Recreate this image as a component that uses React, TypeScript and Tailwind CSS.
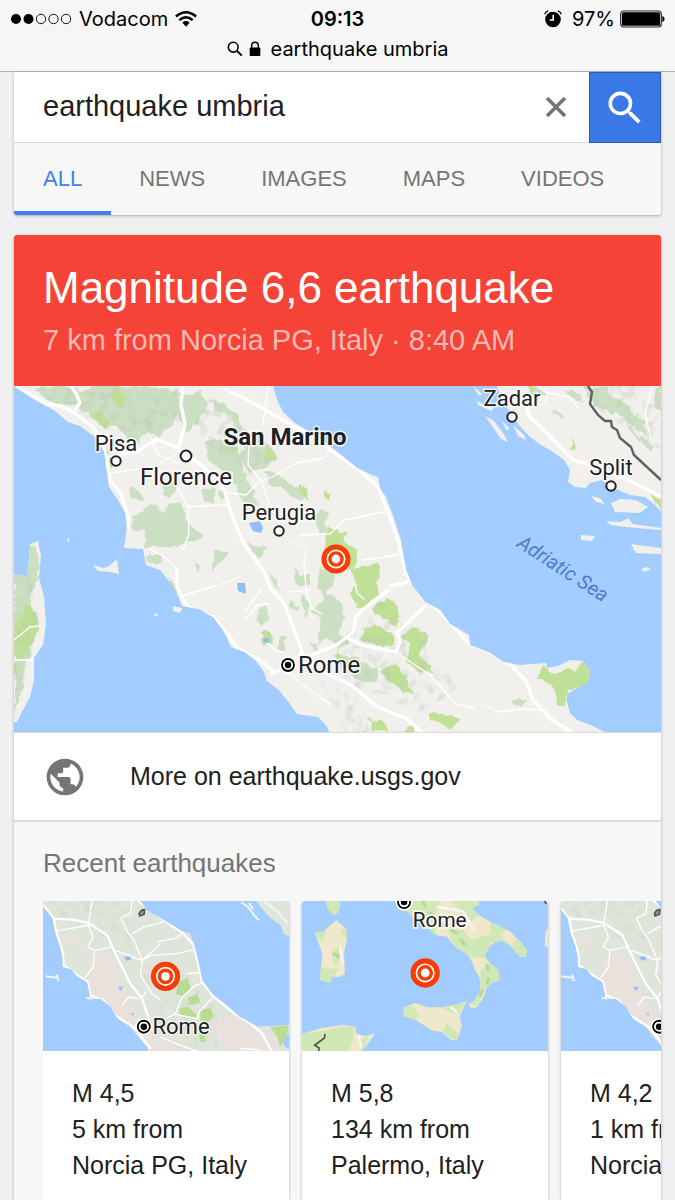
import { useState } from 'react';
import { MdPublic, MdSearch } from 'react-icons/md';

const SANS = "font-['Liberation_Sans',Arial,sans-serif]";

function SignalIcon() {
  return (
    <svg className="h-3 w-[62px]" viewBox="0 0 62 12" aria-hidden="true">
      <circle cx="6" cy="6" r="5" />
      <circle cx="18.500" cy="6" r="5" />
      <g fill="none" stroke="#111" strokeWidth="1">
        <circle cx="31" cy="6" r="4.700" />
        <circle cx="43.500" cy="6" r="4.700" />
        <circle cx="56" cy="6" r="4.700" />
      </g>
    </svg>
  );
}

function WifiIcon() {
  return (
    <svg className="h-4 w-[22px]" viewBox="0 0 22 16" aria-hidden="true" fill="none" stroke="#000" strokeWidth="2.400">
      <path d="M0.900 5.500 Q11 -3 21.100 5.500" />
      <path d="M4.300 9.200 Q11 3.400 17.700 9.200" />
      <path d="M7.300 11.500 Q11 8.600 14.700 11.500 L11 15.800 Z" fill="#000" stroke="none" />
    </svg>
  );
}

function AlarmIcon() {
  return (
    <svg className="h-[18px] w-[18px]" viewBox="0 0 18 18" aria-hidden="true">
      <circle cx="9" cy="9.500" r="7.800" />
      <path d="M0.700 4.200 Q1.500 1.800 4.200 0.900 M17.300 4.200 Q16.500 1.800 13.800 0.900" fill="none" stroke="#000" strokeWidth="1.300" />
      <path d="M9.200 4.800 V10 H5.600" fill="none" stroke="#fff" strokeWidth="1.600" />
    </svg>
  );
}

function BatteryIcon() {
  return (
    <svg className="h-[18px] w-[45px]" viewBox="0 0 45 18" aria-hidden="true">
      <rect x="0.700" y="1" width="40.600" height="16" rx="3" fill="none" stroke="#222" strokeWidth="1.200" />
      <rect x="2" y="2.300" width="38" height="13.400" rx="1.500" />
      <path d="M42.300 6 Q44.600 6.500 44.600 9 Q44.600 11.500 42.300 12 Z" />
    </svg>
  );
}

function SmallSearchIcon() {
  return (
    <svg className="h-4 w-4" viewBox="0 0 16 16" aria-hidden="true" fill="none" stroke="#000" strokeWidth="1.600">
      <circle cx="6.200" cy="6.200" r="4.900" />
      <path d="M9.800 9.800 L14.800 14.600" strokeWidth="2" />
    </svg>
  );
}

function LockIcon() {
  return (
    <svg className="h-4 w-3" viewBox="0 0 12 16" aria-hidden="true">
      <rect x="0.700" y="6.500" width="10.600" height="8.500" rx="0.800" />
      <path d="M2.700 7 V4.600 Q2.700 1.300 6 1.300 Q9.300 1.300 9.300 4.600 V7" fill="none" stroke="#000" strokeWidth="1.500" />
    </svg>
  );
}

function ClearIcon() {
  return (
    <svg className="h-[22px] w-[22px]" viewBox="0 0 22 22" aria-hidden="true" fill="none" stroke="#757575" strokeWidth="3.600">
      <path d="M2 2 L20 20 M20 2 L2 20" />
    </svg>
  );
}

function Epicentre({ x, y, s = 1 }: { x: number; y: number; s?: number }) {
  return (
    <g>
      <circle cx={x} cy={y} r={14.6 * s} fill="#f93c02" />
      <circle cx={x} cy={y} r={8.7 * s} fill="none" stroke="#fff" strokeWidth={1.7 * s} />
      <circle cx={x} cy={y} r={4.4 * s} fill="#fff" />
    </g>
  );
}

function Capital({ x, y, s = 1 }: { x: number; y: number; s?: number }) {
  return (
    <g>
      <circle cx={x} cy={y} r={8.6 * s} fill="#fff" />
      <circle cx={x} cy={y} r={6 * s} fill="#fff" stroke="#000" strokeWidth={1.8 * s} />
      <circle cx={x} cy={y} r={3.2 * s} fill="#000" />
    </g>
  );
}

const italy =
  'M14 386 L35 400 55 411 68 422 80 426 95 437 104 451 106 468 109 487 118 500 125 513 127 527 124 548 143 549 146 565 160 570 168 580 176 591 182 606 199 609 213 617 223 630 231 647 245 652 255 660 264 672 267 681 279 690 290 704 297 714 318 717 325 724 330 733 L606 733 593 726 577 720 570 713 567 702 567 694 588 682 590 671 583 661 570 660 558 666 547 668 546 663 520 665 503 662 490 653 470 645 469 635 450 624 440 610 425 602 412 585 406 570 401 540 393 515 386 497 380 488 378 477 370 474 357 468 335 450 315 435 295 423 283 412 277 400 273 385 Z';
const corsica =
  'M14 574 L20 575 27 577 29 560 30 544 38 541 41 556 39 578 44 597 46 625 43 645 34 658 34 680 30 697 23 710 17 722 14 722 Z';
const croatia =
  'M497 385 L501 400 512 414 519 425 530 437 541 445 553 452 564 460 570 470 568 482 575 487 586 488 590 483 602 480 616 489 630 495 645 497 654 504 662 513 662 385 Z';
const islands = [
  'M473 386 L482 394 479 396 Z', 'M477 401 L486 406 494 408 491 411 478 405 Z', 'M485 416 L494 421 503 433 508 442 501 439 493 427 Z',
  'M513 425 L524 435 526 440 518 436 Z', 'M501 420 L509 428 507 431 Z', 'M591 496 L600 498 605 504 596 502 Z',
  'M611 503 L620 499 636 500 648 507 640 513 615 512 Z', 'M606 521 L621 522 628 518 633 524 661 528 661 530 635 528 611 525 Z',
  'M581 535 L595 536 592 541 581 540 Z', 'M631 544 L661 548 661 554 636 553 Z', 'M641 569 L646 567 651 569 645 572 Z',
  'M630 549 L662 551 659 554 642 552 Z', 'M93 565 L104 568 109 566 117 559 119 574 111 572 98 571 Z',
  'M153 615 L156 613 159 617 Z', 'M173 606 L182 608 180 613 173 611 Z', 'M67 541 L69 536 69 542 Z',
];
const paleGreens = [
  'M35 388 L68 387 82 392 96 386 150 386 178 391 181 409 171 426 158 436 146 432 137 443 126 436 116 426 98 424 88 413 70 405 50 402 Z',
  'M190 398 L213 401 216 411 228 417 238 434 247 444 239 457 247 471 264 468 275 459 274 449 260 437 242 428 236 414 225 405 Z',
  'M180 395 L202 390 208 405 199 420 188 432 180 423 Z',
  'M206 442 L222 439 238 452 246 481 256 491 247 504 237 490 233 474 216 467 207 459 Z',
  'M129 486 L142 493 146 501 131 500 Z', 'M133 516 L150 505 164 512 169 503 182 501 185 519 203 537 189 542 178 548 146 546 143 532 130 526 Z',
  'M164 484 L175 487 171 499 165 496 Z', 'M203 487 L215 491 212 505 203 499 Z', 'M219 490 L226 491 226 502 220 499 Z',
  'M247 492 L258 502 255 507 243 502 Z', 'M264 471 L280 475 290 485 300 487 309 500 300 501 288 492 270 484 Z',
  'M319 510 L326 513 328 531 320 533 315 522 Z', 'M249 542 L267 549 259 559 252 550 Z', 'M216 550 L228 552 222 562 213 570 Z',
  'M147 555 L160 554 164 562 152 565 146 562 Z', 'M195 565 L203 566 197 571 Z', 'M257 610 L267 606 269 620 262 625 256 617 Z',
  'M270 573 L279 585 281 592 272 582 Z', 'M291 600 L298 607 299 613 291 607 Z', 'M304 594 L308 605 306 618 301 605 Z',
  'M320 568 L332 571 336 580 326 591 337 600 345 617 339 631 349 641 338 650 328 638 317 643 322 622 312 609 326 602 317 585 Z',
  'M337 651 L360 659 377 670 377 682 362 683 350 672 338 664 Z', 'M294 566 L300 575 310 575 309 583 295 586 Z',
  'M279 636 L286 638 283 655 279 651 Z', 'M310 643 L318 642 316 651 Z', 'M512 702 L519 698 527 699 520 707 Z',
  'M536 387 L545 394 536 400 527 393 Z', 'M583 386 L605 387 612 397 627 402 633 414 644 421 646 438 636 428 622 417 610 411 594 407 586 393 Z',
  'M623 421 L638 436 653 445 651 452 636 437 Z', 'M565 389 L580 394 582 401 570 398 Z', 'M552 412 L563 413 563 417 553 415 Z',
  'M14 574 L27 577 29 545 38 544 39 576 32 594 25 622 31 650 25 673 18 705 14 712 Z', 'M654 387 L662 387 662 414 656 405 Z',
];
const brightGreens = [
  'M324 535 L330 524 341 533 348 530 345 542 358 549 355 566 348 570 339 556 326 550 Z', 'M351 568 L376 564 380 570 376 590 379 596 370 606 357 607 351 594 357 584 Z',
  'M372 610 L386 598 397 603 399 618 396 628 385 618 376 616 Z', 'M359 638 L373 623 386 630 392 638 393 646 370 644 Z',
  'M400 636 L413 628 425 631 427 643 418 656 428 662 432 670 419 672 407 661 410 644 Z', 'M380 672 L396 664 406 677 412 694 403 693 396 683 386 681 Z',
  'M429 713 L451 715 460 719 454 731 445 727 430 720 Z', 'M368 717 L384 722 387 731 371 730 Z', 'M405 728 L415 726 415 732 404 732 Z',
  'M536 677 L545 665 550 672 556 676 569 668 575 671 583 662 589 665 590 679 579 689 568 690 565 704 556 704 555 687 Z',
  'M260 634 L266 629 275 643 264 645 Z', 'M106 446 L111 462 110 475 106 475 Z', 'M168 577 L175 582 176 592 Z',
  'M90 415 L100 411 110 423 105 429 Z', 'M115 386 L125 400 120 407 108 396 Z', 'M229 444 L239 449 232 455 Z', 'M266 447 L273 450 274 461 265 458 Z',
  'M323 491 L332 492 329 501 Z', 'M570 451 L573 437 576 451 Z', 'M15 628 L25 605 36 612 39 629 29 650 18 660 14 680 Z', 'M527 386 L535 388 534 397 Z',
  'M651 497 L661 499 661 510 655 505 Z', 'M338 650 L345 660 337 665 333 655 Z', 'M512 443 L520 451 513 446 Z', 'M298 482 L309 493 307 501 300 495 Z',
];
const ranges =
  'M30 388 H178 L182 420 140 445 96 424 60 406 Z M185 398 H214 L240 430 275 460 245 480 206 450 Z M340 640 L380 600 430 640 440 680 420 700 360 690 335 670 Z M395 655 L440 665 460 690 420 712 390 700 Z M583 386 H661 V450 L600 412 Z M14 574 H30 L40 620 14 720 Z M320 680 L360 700 370 732 345 732 Z';
const highways = [
  'M14 387 L35 397 47 404 61 406 75 413 94 428 100 440 107 457 110 480 121 494 128 514 128 528', 'M73 413 L80 403 76 393 71 386',
  'M183 386 L181 405 185 424 178 450 M180 449 L157 439 138 451 118 455', 'M181 451 L204 467 224 489 230 510 235 523 243 542 265 573 270 588 284 603 291 622 298 640 303 655',
  'M225 389 L244 398 264 409 291 425 311 435 325 446 345 460 364 474 378 487 391 520 399 544 406 573 423 598 437 609 452 625 469 643 489 652 512 666 526 681 533 700 552 720 570 731',
  'M177 570 L177 587 187 606 213 617 228 634 237 648 260 660 275 673', 'M300 660 L330 675 351 685 376 706 407 719 421 732',
  'M312 655 L338 644 353 632 356 616 372 602 389 590 M349 639 L362 645 396 652 400 641 397 633 425 606',
  'M525 400 L529 416 552 438 573 460 600 468 626 479 646 489 660 496', 'M391 586 L407 582', 'M301 654 L285 668 271 674',
];
const lanes = [
  'M225 492 L246 495 259 482 272 477 296 463 324 458 335 440', 'M188 507 L218 505 228 505 M178 488 L188 507 189 533 183 550', 'M242 430 L249 445 248 465 262 482 270 508',
  'M290 540 L306 548 304 565 306 588 311 608 322 614', 'M261 590 L246 610 M290 592 L310 590 M269 604 L257 605 246 619', 'M300 535 L330 534 344 520 379 513 389 511',
  'M363 560 L385 557 400 554', 'M265 640 L276 651 285 652 M184 595 L216 586 239 577', 'M268 386 L263 425 M110 473 L156 466 176 454',
  'M483 705 L499 712 525 709 540 710', 'M400 655 L430 675 456 704 474 708', 'M652 387 L645 414 651 438', 'M150 436 L158 455 178 463', 'M355 584 L357 593 364 599',
  'M537 386 L548 393 545 404 522 405 M548 393 L570 397 578 408', 'M285 668 L300 683 330 704', 'M14 640 L30 627 39 626 M14 660 L34 660', 'M148 548 L165 557 176 568 177 575',
];

function MapLabel({ x, y, bold, large, children }: { x: number; y: number; bold?: boolean; large?: boolean; children: string }) {
  const face = bold
    ? "font-['Roboto',sans-serif] text-[24px] font-bold"
    : large
      ? "font-['Roboto',sans-serif] text-[24px]"
      : "font-['Roboto',sans-serif] text-[22px]";
  return (
    <text x={x} y={y} textAnchor="middle" paintOrder="stroke" stroke="#fff" strokeOpacity="0.750" strokeWidth="3" fill="#202124" className={face}>
      {children}
    </text>
  );
}

function RegionMap() {
  return (
    <svg className="block h-[346px] w-full" viewBox="14 386 647 346" preserveAspectRatio="xMidYMid slice" role="img" aria-label="Map of central Italy">
      <defs>
        <clipPath id="region-land">
          <path d={italy} /><path d={corsica} /><path d={croatia} />
        </clipPath>
        <filter id="region-rough" x="0" y="0" width="100%" height="100%">
          <feTurbulence type="fractalNoise" baseFrequency="0.100" numOctaves="2" seed="4" result="n" />
          <feDisplacementMap in="SourceGraphic" in2="n" scale="9" xChannelSelector="R" yChannelSelector="G" />
        </filter>
        <filter id="region-relief" x="0" y="0" width="100%" height="100%">
          <feTurbulence type="fractalNoise" baseFrequency="0.110" numOctaves="3" seed="9" />
          <feColorMatrix values="0 0 0 0 0.480  0 0 0 0 0.540  0 0 0 0 0.460  3 0 0 0 -1.400" />
          <feComposite in2="SourceAlpha" operator="in" />
        </filter>
      </defs>
      <rect x="14" y="386" width="647" height="346" fill="#a3ccff" />
      <g fill="#f1f0ed">
        <path d={italy} /><path d={corsica} /><path d={croatia} />
        {islands.map((d) => <path key={d} d={d} />)}
      </g>
      <g clipPath="url(#region-land)">
        <g filter="url(#region-rough)">
          <g fill="#cbdfc3">{paleGreens.map((d) => <path key={d} d={d} />)}</g>
          <g fill="#bfe096">{brightGreens.map((d) => <path key={d} d={d} />)}</g>
        </g>
        <path d={ranges} filter="url(#region-relief)" opacity="0.400" />
        <g fill="none" stroke="#fff" strokeLinejoin="round" strokeLinecap="round">
          <g strokeWidth="1.300">{lanes.map((d) => <path key={d} d={d} />)}</g>
          <g strokeWidth="3.400">{highways.map((d) => <path key={d} d={d} />)}</g>
        </g>
        <g fill="#8fbdf5">
          <path d="M249 523 L260 521 263 528 261 533 253 531 Z M237 583 L245 583 246 594 238 591 Z M263 638 L269 638 269 643 264 642 Z" />
        </g>
      </g>
      <path d="M588 386 L592 392 590 404 598 415 605 421 611 421 612 427 617 430 620 438 631 447 634 455 648 468 661 480" fill="none" stroke="#616161" strokeWidth="2.400" />
      <g fill="#fff" stroke="#222" strokeWidth="2">
        <circle cx="116" cy="461" r="4.700" /><circle cx="186" cy="456" r="5.400" /><circle cx="279" cy="531" r="4.700" />
        <circle cx="512" cy="417" r="4.700" /><circle cx="611" cy="486" r="4.700" />
      </g>
      <MapLabel x={116} y={451}>Pisa</MapLabel>
      <MapLabel x={186} y={485} large>Florence</MapLabel>
      <MapLabel x={279} y={520}>Perugia</MapLabel>
      <MapLabel x={512} y={406}>Zadar</MapLabel>
      <MapLabel x={611} y={475}>Split</MapLabel>
      <MapLabel x={285} y={445} bold>San Marino</MapLabel>
      <MapLabel x={329} y={673} large>Rome</MapLabel>
      <Capital x={288} y={665} />
      <text x="562" y="575" textAnchor="middle" transform="rotate(33 562 570)" fill="#4a7fc8" className="font-['Roboto',sans-serif] text-[20px] italic">Adriatic Sea</text>
      <Epicentre x={336} y={559} />
    </svg>
  );
}

const thumbLand =
  'M128 31 L128 48 155 82 165 130 180 170 187 205 186 230 212 236 230 258 260 275 268 310 268 326 300 325 330 348 352 385 390 408 410 435 440 470 445 486 L870 486 870 480 850 465 850 445 865 430 865 404 770 408 715 378 680 345 636 312 605 270 595 220 580 160 568 128 545 122 490 90 440 60 418 30 Z';

function CentralThumb({ id, offset = 0 }: { id: string; offset?: number }) {
  return (
    <svg className="block h-[150px] w-full" viewBox={`${128 + offset} 31 737 452`} preserveAspectRatio="xMidYMid slice" role="img" aria-label="Map of the area around Norcia">
      <defs>
        <clipPath id={`${id}-land`}><path d={thumbLand} /></clipPath>
        <filter id={`${id}-relief`} x="0" y="0" width="100%" height="100%">
          <feTurbulence type="fractalNoise" baseFrequency="0.040" numOctaves="3" seed="7" />
          <feColorMatrix values="0 0 0 0 0.600  0 0 0 0 0.660  0 0 0 0 0.590  2.400 0 0 0 -1.100" />
          <feComposite in2="SourceAlpha" operator="in" />
        </filter>
      </defs>
      <rect x="100" y="31" width="800" height="460" fill="#a3ccff" />
      <path d={thumbLand} fill="#dfe5da" />
      <path d="M765 31 H880 V145 L850 132 840 105 800 75 Z" fill="#dfe5da" />
      <path d="M722 36 L742 50 760 74 775 90 M745 38 L757 56 M137 258 L175 263 M170 252 L174 272 M258 322 L275 325 M790 34 L830 62 862 100" fill="none" stroke="#f2f4f0" strokeWidth="6" />
      <g clipPath={`url(#${id}-land)`}>
        <path d="M265 190 L320 185 350 230 370 300 420 385 470 440 600 486 430 486 330 350 265 310 Z M190 135 L230 140 225 175 195 165 Z M600 400 L700 370 830 440 830 486 700 486 Z M420 230 L450 220 455 270 425 265 Z" fill="#e9e2dc" />
        <path d="M128 31 H400 L380 90 400 180 340 180 260 95 150 75 Z M400 200 L560 260 650 360 650 486 520 470 480 360 Z" filter={`url(#${id}-relief)`} opacity="0.600" />
        <g fill="#b9dc92">
          <path d="M530 275 L562 262 570 295 548 320 527 312 Z M560 322 L590 312 600 336 570 345 Z M535 355 L560 348 590 375 580 387 538 374 Z M600 358 L630 353 640 378 615 405 600 390 Z M595 435 L615 425 615 455 600 455 Z M808 410 L862 405 858 450 838 468 830 440 Z" />
        </g>
        <g fill="none" stroke="#fff" strokeLinejoin="round">
          <path strokeWidth="7" d="M128 45 L160 85 168 125 188 190 190 225 225 250 262 275 270 315 310 330 345 375 405 415 450 475 M162 85 L215 88 262 97 320 135 345 190 390 280 425 325 445 385 M412 31 L480 82 545 127 580 165 605 275 640 320 700 368 750 400 785 430 815 486" />
          <path strokeWidth="4" d="M275 31 L265 97 M170 122 L265 105 M262 100 L278 140 262 170 283 180 335 170 M283 180 L278 230 255 262 M395 31 L390 70 362 82 378 120 400 150 425 210 480 160 M395 130 L430 110 490 95 M345 180 L425 210 450 195 530 190 580 178 M425 210 L420 255 455 310 480 330 M425 320 L440 300 M365 345 L385 320 415 325 M470 155 L530 143 545 127 M495 385 L525 370 545 320 585 285 608 277 M525 372 L590 385 595 365 637 322 M480 440 L540 465 600 486 M560 250 L600 247 M720 475 L780 478" />
        </g>
        <path d="M370 200 L388 198 392 208 378 211 Z M352 292 L368 288 362 302 Z M390 370 L400 368 398 376 Z" fill="#8fbdf5" />
      </g>
      <path d="M416 70 L423 60 432 58 431 72 418 77 Z" fill="#999" stroke="#555" strokeWidth="5" />
      <Capital x={430} y={409} s={3} />
      <text x="456" y="432" fill="#202124" stroke="#fff" strokeOpacity="0.700" strokeWidth="8" paintOrder="stroke" className="font-['Roboto',sans-serif] text-[66px]">Rome</text>
      <Epicentre x={495} y={258} s={3} />
    </svg>
  );
}

function SouthThumb() {
  return (
    <svg className="block h-[150px] w-full" viewBox="37 31 735 452" preserveAspectRatio="xMidYMid slice" role="img" aria-label="Map of the Tyrrhenian Sea">
      <defs>
        <clipPath id="south-land">
          <path d="M315 31 L335 48 365 78 400 105 440 135 470 140 495 170 525 188 540 205 555 240 568 265 570 300 550 335 535 340 540 352 558 352 580 320 590 290 608 275 626 270 624 240 595 215 582 195 600 165 628 150 655 162 690 200 705 200 710 180 680 145 660 125 600 95 565 75 545 55 565 45 565 31 Z M340 352 L375 337 410 350 450 350 500 342 530 330 508 378 515 408 500 450 480 447 455 425 425 420 380 390 342 378 Z M75 125 L100 125 140 90 170 118 172 145 163 185 165 250 150 260 128 258 120 278 90 268 98 190 85 155 Z M108 31 L152 31 148 60 135 76 115 58 Z M37 430 L95 412 160 403 195 408 200 430 228 436 255 428 235 458 210 486 37 486 Z M765 125 L775 110 775 175 762 165 Z" />
        </clipPath>
      </defs>
      <rect x="30" y="31" width="750" height="460" fill="#a3ccff" />
      <g clipPath="url(#south-land)">
        <rect x="30" y="31" width="750" height="460" fill="#f0e8cb" />
        <g fill="#cfe8b5">
          <path d="M108 31 H152 V76 H108 Z M75 125 L110 125 95 155 Z M125 185 L150 165 155 200 135 230 Z M90 235 L145 235 120 280 90 265 Z M150 115 L175 120 170 150 Z M315 31 H450 L430 80 440 140 360 80 Z M480 31 H565 V75 L540 95 510 60 Z M470 110 L520 120 540 150 620 125 660 165 690 140 715 175 700 210 650 175 600 155 585 205 540 200 490 170 Z M600 90 L650 115 625 145 600 130 Z M570 240 L610 215 630 245 620 275 590 290 560 345 540 340 570 295 Z M340 352 L365 345 385 370 380 390 340 378 Z M450 350 L530 330 505 370 480 365 Z M470 400 L510 435 500 450 455 430 Z M37 430 L195 403 190 440 175 486 37 486 Z M210 450 L240 430 215 486 Z" />
        </g>
        <path d="M395 31 L420 70 450 100 500 130 530 175 M590 220 L595 270 565 320 M130 190 L152 200" fill="none" stroke="#b5d79a" strokeWidth="9" strokeDasharray="22 20" />
        <path d="M440 50 L520 65 550 120 M480 350 L500 365 M150 165 L158 225 M205 435 L215 470" fill="none" stroke="#f5f6f0" strokeWidth="8" />
      </g>
      <path d="M106 430 L104 442 75 464 88 472 87 486 M762 31 L766 42" fill="none" stroke="#555" strokeWidth="5" />
      <Capital x={342} y={36} s={3} />
      <text x="368" y="112" fill="#202124" stroke="#fff" strokeOpacity="0.800" strokeWidth="10" paintOrder="stroke" className="font-['Roboto',sans-serif] text-[62px]">Rome</text>
      <Epicentre x={405} y={248} s={3} />
    </svg>
  );
}

const tabs = ['ALL', 'NEWS', 'IMAGES', 'MAPS', 'VIDEOS'];

const quakes = [
  { magnitude: 'M 4,5', distance: '5 km from', place: 'Norcia PG, Italy', map: <CentralThumb id="first" /> },
  { magnitude: 'M 5,8', distance: '134 km from', place: 'Palermo, Italy', map: <SouthThumb /> },
  { magnitude: 'M 4,2', distance: '1 km from', place: 'Norcia PG, Italy', map: <CentralThumb id="third" offset={8} /> },
];

export default function App() {
  const [query, setQuery] = useState('earthquake umbria');
  return (
    <div className={`min-h-screen bg-[#f0f0f0] text-[#212121] ${SANS}`}>
      <header className="h-[72px] border-b border-[#b0b0b0] bg-[#f7f6f7] font-['Inter',sans-serif] text-[20px] leading-6 text-black">
        <div className="grid grid-cols-[1fr_auto_1fr] items-center px-[10px] pt-[7px]">
          <div className="flex items-center gap-[7px]">
            <SignalIcon />
            <span>Vodacom</span>
            <WifiIcon />
          </div>
          <time className="font-semibold">09:13</time>
          <div className="flex items-center justify-end">
            <AlarmIcon />
            <span className="mr-[5px] ml-[10px]">97%</span>
            <BatteryIcon />
          </div>
        </div>
        <div className="mt-[6px] flex items-center justify-center">
          <SmallSearchIcon />
          <span className="mr-[10px] ml-[6px] flex"><LockIcon /></span>
          <span>earthquake umbria</span>
        </div>
      </header>

      <main className="mx-[14px]">
        <section className="rounded-b-[3px] bg-[#f7f7f7] shadow-[0_1px_3px_rgba(0,0,0,0.3)]">
          <form className="flex h-[71px] bg-white" onSubmit={(e) => e.preventDefault()}>
            <input
              aria-label="Search"
              value={query}
              onChange={(e) => setQuery(e.target.value)}
              className="min-w-0 flex-1 border-b border-[#dcdcdc] bg-transparent pl-[29px] text-[29px] outline-none"
            />
            <button type="button" aria-label="Clear" onClick={() => setQuery('')} className="flex w-[66px] items-center justify-center border-b border-[#dcdcdc]">
              <ClearIcon />
            </button>
            <button type="submit" aria-label="Search" className="flex w-[72px] items-center justify-center border border-[#2f5bb7] bg-[#3b78e7] text-white">
              <MdSearch size={44} />
            </button>
          </form>
          <nav className="flex h-[72px] text-[22px] text-[#757575]">
            {tabs.map((tab) => (
              <a
                key={tab}
                href={`#${tab.toLowerCase()}`}
                className={
                  tab === 'ALL'
                    ? 'flex items-center rounded-bl-[3px] border-b-4 border-[#4080ee] px-[29px] pt-[2px] text-[#4080ee]'
                    : 'flex items-center border-b-4 border-transparent px-[28px] pt-[2px]'
                }
              >
                {tab}
              </a>
            ))}
          </nav>
        </section>

        <section className="mt-5 rounded-t-[3px] bg-white shadow-[0_1px_3px_rgba(0,0,0,0.3)]">
          <div className="h-[151px] rounded-t-[3px] bg-[#f54337] px-[29px] pt-[26px]">
            <h1 className="text-[44px] leading-[54px] text-white">Magnitude 6,6 earthquake</h1>
            <p className="mt-[6px] text-[29px] leading-[38px] text-[#fbb9b3]">7 km from Norcia PG, Italy · 8:40 AM</p>
          </div>
          <RegionMap />
          <a href="#usgs" className="flex h-[90px] items-center gap-[43px] border-t border-b-2 border-[#dcdcdc] px-[29px] text-[25px]">
            <MdPublic size={44} className="text-[#757575]" />
            More on earthquake.usgs.gov
          </a>
          <div className="bg-[#f7f7f7] pt-[23px] pl-[29px]">
            <h2 className="text-[26px] leading-9 text-[#757575]">Recent earthquakes</h2>
            <div className="mt-5 flex gap-[13px] overflow-x-auto overflow-y-hidden [scrollbar-width:none]">
              {quakes.map((quake) => (
                <article key={quake.magnitude} className="w-[246px] shrink-0 overflow-hidden rounded-t-[3px] bg-white shadow-[0_1px_3px_rgba(0,0,0,0.3)]">
                  {quake.map}
                  <div className="px-[29px] pt-6 pb-[17px] text-[25px] leading-9 whitespace-nowrap">
                    <p>{quake.magnitude}</p>
                    <p>{quake.distance}</p>
                    <p>{quake.place}</p>
                  </div>
                </article>
              ))}
            </div>
          </div>
        </section>
      </main>
    </div>
  );
}
